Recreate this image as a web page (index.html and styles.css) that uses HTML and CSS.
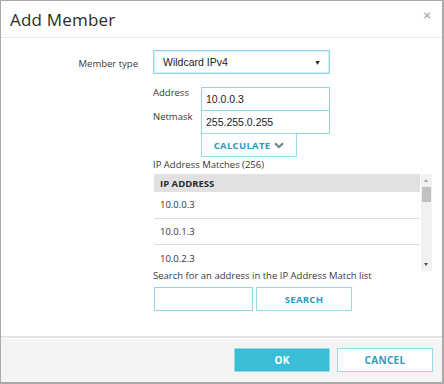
FILE: index.html
```html
<!DOCTYPE html>
<html>
<head>
<meta charset="utf-8">
<link rel="stylesheet" href="styles.css">
</head>
<body>
<div class="dialog">
  <div class="header">
    <h1 class="title">Add Member</h1>
    <span class="close">&#x2715;</span>
  </div>
  <div class="body">
    <div class="form">
      <div class="label-col"><span class="label member-label">Member type</span></div>
      <div class="field-col">
        <div class="select">
          <span class="select-text">Wildcard IPv4</span>
          <span class="select-arrow">&#9660;</span>
        </div>
        <div class="addr-grid">
          <span class="sub-label">Address</span>
          <div class="input">10.0.0.3</div>
          <span class="sub-label">Netmask</span>
          <div class="input stacked">255.255.0.255</div>
          <span></span>
          <div class="btn calc">CALCULATE
            <svg class="chev" width="10" height="7" viewBox="0 0 10 7"><path d="M1 1.2 L5 5 L9 1.2" fill="none" stroke="#6f858c" stroke-width="2.2"/></svg>
          </div>
        </div>
        <div class="matches">IP Address Matches (256)</div>
        <div class="table-wrap">
          <div class="table">
            <div class="th">IP ADDRESS</div>
            <div class="td">10.0.0.3</div>
            <div class="td">10.0.1.3</div>
            <div class="td last">10.0.2.3</div>
          </div>
          <div class="scrollbar">
            <div class="sb-arrow up"></div>
            <div class="sb-track"><div class="sb-thumb"></div></div>
            <div class="sb-arrow down"></div>
          </div>
        </div>
        <div class="search-hint">Search for an address in the IP Address Match list</div>
        <div class="search-row">
          <div class="input search-input"></div>
          <div class="btn search-btn">SEARCH</div>
        </div>
      </div>
    </div>
  </div>
  <div class="footer">
    <div class="btn ok">OK</div>
    <div class="btn cancel">CANCEL</div>
  </div>
</div>
</body>
</html>
```

FILE: styles.css
```css
html, body {
  margin: 0;
  padding: 0;
  background: #ffffff;
}
.dialog {
  box-sizing: border-box;
  width: 444px;
  height: 384px;
  border-style: solid;
  border-color: #a9a9a9;
  border-width: 1px 2px 2px 1px;
  display: flex;
  flex-direction: column;
  font-family: "Open Sans", sans-serif;
  color: #333;
  background: #fff;
}
.header {
  height: 36px;
  border-bottom: 1px solid #e6e6e6;
  display: flex;
  align-items: center;
  justify-content: space-between;
  padding: 0 11px 0 9px;
}
.title {
  margin: 0;
  font-family: "Open Sans", sans-serif;
  font-weight: 400;
  font-size: 17px;
  color: #2b2b2b;
  letter-spacing: 0.2px;
}
.close {
  font-size: 10px;
  color: #b3b3b3;
  font-weight: 700;
  margin-top: -8px;
}
.body {
  flex: 1;
  padding-top: 12px;
}
.form {
  display: flex;
}
.label-col {
  width: 152px;
  box-sizing: border-box;
  padding-right: 15px;
  text-align: right;
}
.label {
  font-size: 9.5px;
  color: #3a3a3a;
  display: inline-block;
  margin-top: 4px;
}
.field-col {
  display: flex;
  flex-direction: column;
  width: 280px;
}
.select {
  box-sizing: border-box;
  width: 177px;
  height: 24px;
  border: 1px solid #8fd6e4;
  box-shadow: inset 0 0 0 1px #d6f1f6;
  display: flex;
  align-items: center;
  justify-content: space-between;
  padding: 0 8px 0 9px;
  font-family: "Liberation Sans", Arial, sans-serif;
  font-size: 10.5px;
  color: #222;
}
.select-arrow {
  font-size: 7px;
  color: #222;
}
.addr-grid {
  display: grid;
  grid-template-columns: 48px 129px;
  margin-top: 13px;
}
.sub-label {
  font-size: 9.5px;
  color: #3a3a3a;
  line-height: 12px;
}
.input {
  box-sizing: border-box;
  height: 24px;
  border: 1px solid #8fd6e4;
  display: flex;
  align-items: center;
  padding-left: 4px;
  font-family: "Liberation Sans", Arial, sans-serif;
  font-size: 10.5px;
  color: #222;
}
.stacked {
  margin-top: -1px;
}
.btn {
  box-sizing: border-box;
  height: 24px;
  border: 1px solid #95dbe8;
  display: flex;
  align-items: center;
  justify-content: center;
  font-family: "Open Sans", sans-serif;
  font-weight: 700;
  font-size: 9.5px;
  color: #2a9cbd;
  letter-spacing: 0.3px;
  background: #fff;
}
.calc {
  width: 96px;
  margin-top: -1px;
  gap: 4px;
}
.matches {
  font-size: 9.5px;
  color: #3a3a3a;
  margin-top: 1px;
  line-height: 14px;
}
.table-wrap {
  display: flex;
  margin-top: 2px;
  height: 97px;
  overflow: hidden;
}
.table {
  width: 266px;
  margin-left: 1px;
}
.th {
  height: 18px;
  background: #e1e1e1;
  font-weight: 700;
  font-size: 9.5px;
  color: #2a2a2a;
  display: flex;
  align-items: center;
  padding-left: 6px;
}
.td {
  box-sizing: border-box;
  height: 26.7px;
  border-bottom: 1px solid #dcdcdc;
  font-size: 9.5px;
  color: #333;
  display: flex;
  align-items: center;
  padding-left: 6px;
}
.td.last {
  border-bottom: none;
}
.scrollbar {
  width: 11px;
  margin-left: 1px;
  display: flex;
  flex-direction: column;
  background: #f1f1f1;
}
.sb-arrow {
  height: 12px;
  position: relative;
}
.sb-arrow::after {
  content: "";
  position: absolute;
  left: 3px;
  width: 0;
  height: 0;
  border-left: 2.5px solid transparent;
  border-right: 2.5px solid transparent;
}
.sb-arrow.up::after {
  top: 5px;
  border-bottom: 3px solid #a0a0a0;
}
.sb-arrow.down::after {
  top: 4px;
  border-top: 3px solid #505050;
}
.sb-track {
  flex: 1;
  padding: 1px 1px;
}
.sb-thumb {
  height: 15px;
  background: #c1c1c1;
}
.search-hint {
  font-size: 9.5px;
  color: #3a3a3a;
  margin-top: -1px;
  line-height: 12px;
}
.search-row {
  display: flex;
  gap: 3px;
  margin-top: 5px;
  margin-left: 1px;
}
.search-input {
  width: 99px;
}
.search-btn {
  width: 96px;
}
.footer {
  box-sizing: border-box;
  height: 46px;
  border-top: 2px solid #e4e4e4;
  box-shadow: inset 0 1px 0 #ffffff;
  background: #f4f4f4;
  display: flex;
  justify-content: flex-end;
  align-items: flex-start;
  padding: 10px 9px 0 0;
  gap: 7px;
}
.ok {
  width: 96px;
  background: #3bbcd7;
  border-color: #8fdbe9;
  color: #fff;
  font-size: 10px;
}
.cancel {
  width: 96px;
  font-size: 10px;
}
```
